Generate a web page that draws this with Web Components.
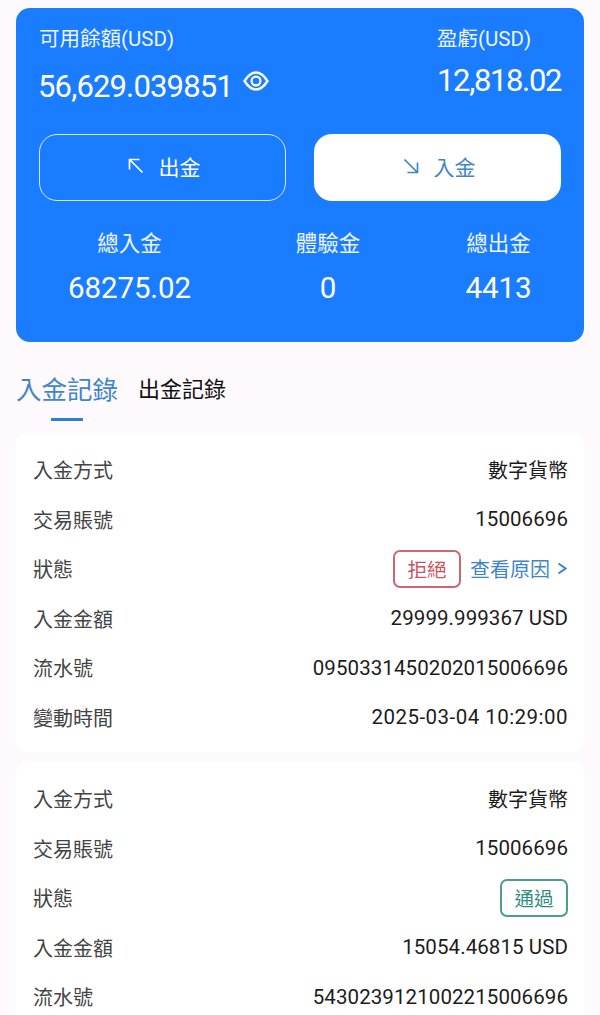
<!DOCTYPE html>
<html lang="zh-Hant">
<head>
<meta charset="utf-8">
<style>
  html, body { margin: 0; padding: 0; }
  body {
    width: 600px;
    height: 1015px;
    overflow: hidden;
    background: #fdf9fd;
    color: #1c1c1c;
    font-family: Roboto, "Noto Sans CJK TC", sans-serif;
  }
</style>
</head>
<body>
<balance-card
  balance="56,629.039851" profit="12,818.02"
  total-in="68275.02" trial="0" total-out="4413"></balance-card>
<record-tabs></record-tabs>
<record-card>
  <record-row label="入金方式">數字貨幣</record-row>
  <record-row label="交易賬號" num>15006696</record-row>
  <record-row label="狀態"><status-tag kind="reject">拒絕</status-tag><reason-link>查看原因</reason-link></record-row>
  <record-row label="入金金額" num>29999.999367 USD</record-row>
  <record-row label="流水號" num>0950331450202015006696</record-row>
  <record-row label="變動時間" num spacing=".47px">2025-03-04 10:29:00</record-row>
</record-card>
<record-card>
  <record-row label="入金方式">數字貨幣</record-row>
  <record-row label="交易賬號" num>15006696</record-row>
  <record-row label="狀態"><status-tag kind="pass">通過</status-tag></record-row>
  <record-row label="入金金額" num>15054.46815 USD</record-row>
  <record-row label="流水號" num>5430239121002215006696</record-row>
</record-card>

<script>
const FONT = 'Roboto, "Noto Sans CJK TC", sans-serif';

class BalanceCard extends HTMLElement {
  connectedCallback() {
    const a = (n) => this.getAttribute(n);
    const root = this.attachShadow({ mode: "open" });
    root.innerHTML = `
      <style>
        :host {
          display: block;
          margin: 8px 16px 0;
          height: 334px;
          box-sizing: border-box;
          padding: 18px 23px 0 23px;
          background: #1a7cff;
          border-radius: 14px;
          color: #fff;
          font-family: ${FONT};
        }
        .top { display: flex; justify-content: space-between; }
        .label { font-size: 20.500px; line-height: 26px; color: #eef5ff; }
        .num { font-size: 31px; line-height: 40px; margin-top: 15px; display: flex; align-items: center; letter-spacing: -.85px; }
        .left .num { margin-left: -1px; }
        .right .num { margin-top: 9px; letter-spacing: -1.350px; }
        .right { width: 124px; }
        .eye { width: 26px; height: 20px; margin: -12px 0 0 10px; }
        .btns { display: flex; justify-content: space-between; margin-top: 27px; }
        .stats { display: grid; grid-template-columns: 181px 216px 125px; margin-top: 29px; text-align: center; }
        .stats .label { font-size: 21.500px; line-height: 28px; }
        .stats .val { font-size: 29.500px; line-height: 38px; margin-top: 11px; letter-spacing: -.1px; }
      </style>
      <div class="top">
        <div class="left">
          <div class="label">可用餘額(USD)</div>
          <div class="num">${a("balance")}
            <svg class="eye" viewBox="0 0 26 20" fill="none" stroke="#fff" stroke-width="2.400">
              <path d="M1.500 10C5 4.500 9 1.500 13 1.500S21 4.500 24.500 10C21 15.500 17 18.500 13 18.500S5 15.500 1.500 10Z"/>
              <circle cx="13" cy="10" r="4.400" stroke-width="2.200"/>
            </svg>
          </div>
        </div>
        <div class="right">
          <div class="label">盈虧(USD)</div>
          <div class="num">${a("profit")}</div>
        </div>
      </div>
      <div class="btns">
        <action-button dir="out">出金</action-button>
        <action-button dir="in" solid>入金</action-button>
      </div>
      <div class="stats">
        <div><div class="label">總入金</div><div class="val">${a("total-in")}</div></div>
        <div><div class="label">體驗金</div><div class="val">${a("trial")}</div></div>
        <div><div class="label">總出金</div><div class="val">${a("total-out")}</div></div>
      </div>`;
  }
}

class ActionButton extends HTMLElement {
  connectedCallback() {
    const solid = this.hasAttribute("solid");
    const arrow = this.getAttribute("dir") === "in"
      ? "M1.500 1.500L14.500 14.500M14.500 4.500V14.500H4.500"
      : "M14.500 14.500L1.500 1.500M1.500 11.500V1.500H11.500";
    const root = this.attachShadow({ mode: "open" });
    root.innerHTML = `
      <style>
        :host {
          display: flex;
          align-items: center;
          justify-content: center;
          gap: 15px;
          width: 247px;
          height: 67px;
          box-sizing: border-box;
          padding: 0 0 3px 3px;
          border-radius: 18px;
          font-size: 21px;
          font-family: ${FONT};
          color: ${solid ? "#3f86c9" : "#fff"};
          background: ${solid ? "#fff" : "transparent"};
          border: ${solid ? "0" : "1.700px solid #dbe9ff"};
        }
        svg { width: 16px; height: 16px; }
      </style>
      <svg viewBox="0 0 16 16" fill="none" stroke="currentColor" stroke-width="1.700"><path d="${arrow}"/></svg>
      <slot></slot>`;
  }
}

class RecordTabs extends HTMLElement {
  connectedCallback() {
    const root = this.attachShadow({ mode: "open" });
    root.innerHTML = `
      <style>
        :host {
          display: flex;
          align-items: flex-start;
          gap: 20px;
          margin: 30px 0 0 16px;
          height: 61px;
          font-family: ${FONT};
        }
        .on {
          position: relative;
          font-size: 25.500px;
          line-height: 36px;
          color: #3f86c9;
        }
        .on::after {
          content: "";
          position: absolute;
          left: 35px;
          top: 46px;
          width: 32px;
          height: 3px;
          background: #2f7fd0;
        }
        .off { font-size: 22px; line-height: 36px; color: #111; }
      </style>
      <div class="on">入金記錄</div>
      <div class="off">出金記錄</div>`;
  }
}

class RecordCard extends HTMLElement {
  connectedCallback() {
    const root = this.attachShadow({ mode: "open" });
    root.innerHTML = `
      <style>
        :host {
          display: block;
          margin: 0 16px 10px;
          padding: 12px 16px 10px 17px;
          background: #fff;
          border-radius: 12px;
          box-shadow: 0 0 5px #fff;
          font-family: ${FONT};
        }
      </style>
      <slot></slot>`;
  }
}

class RecordRow extends HTMLElement {
  connectedCallback() {
    const size = this.hasAttribute("num") ? "20.500px" : "20px";
    const spacing = this.getAttribute("spacing") || (this.hasAttribute("num") ? ".08px" : "0");
    const root = this.attachShadow({ mode: "open" });
    root.innerHTML = `
      <style>
        :host {
          display: flex;
          align-items: center;
          justify-content: space-between;
          height: 49.500px;
          font-size: 20px;
          color: #1c1c1c;
        }
        .label { color: #444; }
        .value { display: flex; align-items: center; font-size: ${size}; letter-spacing: ${spacing}; }
      </style>
      <span class="label">${this.getAttribute("label")}</span>
      <span class="value"><slot></slot></span>`;
  }
}

class StatusTag extends HTMLElement {
  connectedCallback() {
    const color = this.getAttribute("kind") === "reject" ? "#cf6670" : "#4a9d8f";
    const text = this.getAttribute("kind") === "reject" ? "#c9545f" : "#2f8f7f";
    const root = this.attachShadow({ mode: "open" });
    root.innerHTML = `
      <style>
        :host {
          display: flex;
          align-items: center;
          justify-content: center;
          width: 68px;
          height: 38px;
          box-sizing: border-box;
          border: 2px solid ${color};
          border-radius: 7px;
          color: ${text};
          font-size: 19.500px;
        }
      </style>
      <slot></slot>`;
  }
}

class ReasonLink extends HTMLElement {
  connectedCallback() {
    const root = this.attachShadow({ mode: "open" });
    root.innerHTML = `
      <style>
        :host {
          display: flex;
          align-items: center;
          gap: 7px;
          margin-left: 9px;
          color: #3f86c9;
          font-size: 20px;
        }
        svg { width: 10px; height: 13px; margin-right: 1px; }
      </style>
      <slot></slot>
      <svg viewBox="0 0 10 13" fill="none" stroke="currentColor" stroke-width="2"><path d="M1.500 1.500L8.500 6.500L1.500 11.500"/></svg>`;
  }
}

customElements.define("balance-card", BalanceCard);
customElements.define("action-button", ActionButton);
customElements.define("record-tabs", RecordTabs);
customElements.define("record-card", RecordCard);
customElements.define("record-row", RecordRow);
customElements.define("status-tag", StatusTag);
customElements.define("reason-link", ReasonLink);
</script>
</body>
</html>
